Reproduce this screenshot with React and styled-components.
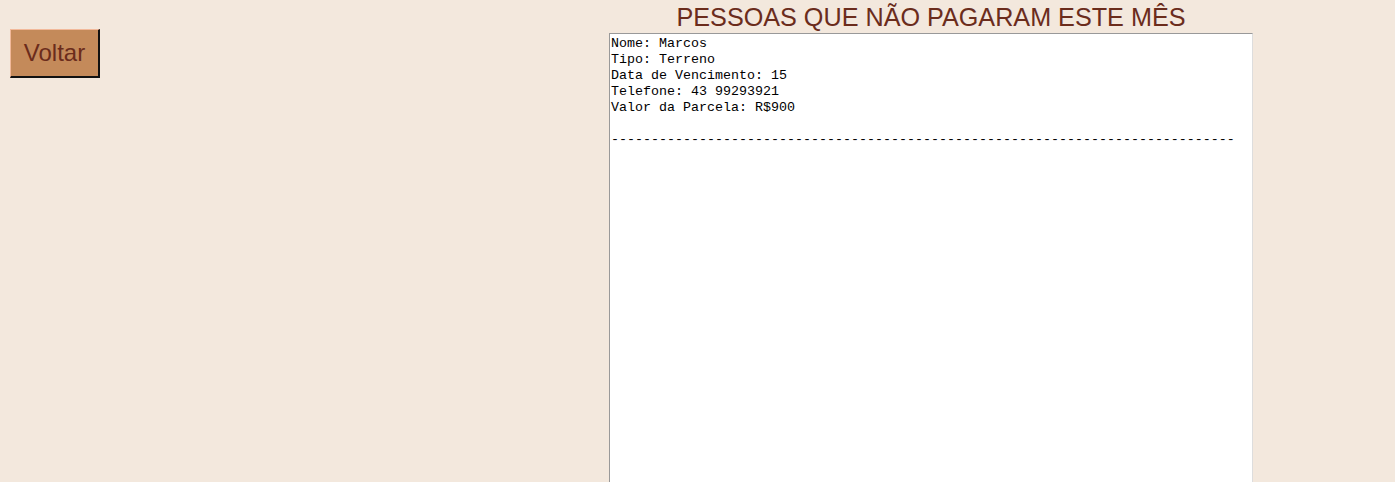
import React from "react";
import styled, { createGlobalStyle } from "styled-components";

const GlobalStyle = createGlobalStyle`
  html, body {
    margin: 0;
    padding: 0;
    background: #f3e8dd;
  }
  body {
    font-family: "Liberation Sans", Arial, sans-serif;
    overflow: hidden;
  }
`;

const Page = styled.div`
  display: flex;
  align-items: flex-start;
  min-height: 482px;
  padding-left: 10px;
`;

const BackButton = styled.button`
  margin-top: 29px;
  width: 90px;
  height: 49px;
  padding: 0;
  background: #c48a5a;
  color: #6b2c1c;
  font-family: "Liberation Sans", Arial, sans-serif;
  font-size: 24px;
  border-style: solid;
  border-width: 1px 2px 2px 1px;
  border-color: #f2b99a #111 #111 #f2b99a;
  cursor: pointer;
`;

const Panel = styled.div`
  margin-left: 509px;
  width: 644px;
  display: flex;
  flex-direction: column;
`;

const Title = styled.h1`
  margin: 0;
  height: 33px;
  padding-top: 3px;
  box-sizing: border-box;
  text-align: center;
  font-weight: normal;
  font-size: 25.2px;
  line-height: 28px;
  color: #6b2c1c;
`;

const Report = styled.textarea`
  box-sizing: border-box;
  width: 644px;
  height: 460px;
  margin: 0;
  padding: 2px 1px;
  resize: none;
  border: 1px solid #999;
  border-right-color: #ddd;
  background: #fff;
  color: #000;
  font-family: "Liberation Mono", "Courier New", monospace;
  font-size: 13.33px;
  line-height: 16px;
  outline: none;
`;

const devedores = [
  {
    nome: "Marcos",
    tipo: "Terreno",
    vencimento: 15,
    telefone: "43 99293921",
    parcela: "R$900",
  },
];

function montarTexto(lista) {
  return lista
    .map(
      (p) =>
        `Nome: ${p.nome}\nTipo: ${p.tipo}\nData de Vencimento: ${p.vencimento}\nTelefone: ${p.telefone}\nValor da Parcela: ${p.parcela}\n\n${"-".repeat(78)}\n`
    )
    .join("");
}

export default function App() {
  return (
    <>
      <GlobalStyle />
      <Page>
        <BackButton>Voltar</BackButton>
        <Panel>
          <Title>PESSOAS QUE NÃO PAGARAM ESTE MÊS</Title>
          <Report readOnly value={montarTexto(devedores)} />
        </Panel>
      </Page>
    </>
  );
}
